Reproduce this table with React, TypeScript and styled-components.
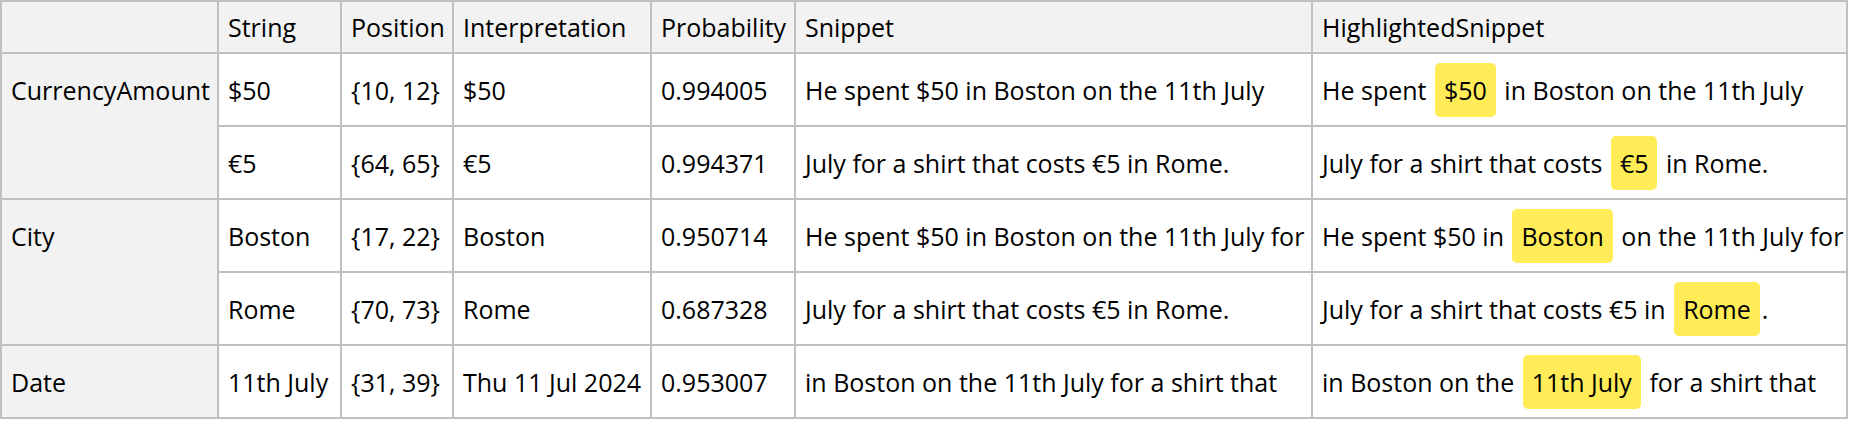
import React from "react";
import styled, { createGlobalStyle } from "styled-components";

const GlobalStyle = createGlobalStyle`
  html, body {
    margin: 0;
    padding: 0;
    background: #ffffff;
  }
  *, *::before, *::after {
    box-sizing: border-box;
  }
`;

const LINE = "#c0c0c0";

const Table = styled.table`
  border-collapse: separate;
  border-spacing: 0;
  table-layout: fixed;
  width: 1846px;
  border-top: 2px solid ${LINE};
  border-left: 2px solid ${LINE};
  font-family: "Open Sans", "Noto Sans", sans-serif;
  font-size: 25px;
  color: #000000;
`;

const HeadCell = styled.th`
  height: 52px;
  padding: 0 9px;
  text-align: left;
  font-weight: 400;
  background: #f2f2f2;
  border-right: 2px solid ${LINE};
  border-bottom: 2px solid ${LINE};
  white-space: nowrap;
  vertical-align: middle;
`;

const GroupCell = styled.th`
  padding: 0 9px;
  text-align: left;
  font-weight: 400;
  background: #f2f2f2;
  border-right: 2px solid ${LINE};
  border-bottom: 2px solid ${LINE};
  vertical-align: top;
  white-space: nowrap;
`;

const GroupLabel = styled.div`
  height: 71px;
  display: flex;
  align-items: center;
`;

const Cell = styled.td`
  height: 73px;
  padding: 0 9px;
  border-right: 2px solid ${LINE};
  border-bottom: 2px solid ${LINE};
  vertical-align: middle;
  white-space: nowrap;
  overflow: hidden;
`;

const Pill = styled.span`
  display: inline-block;
  line-height: 54px;
  padding: 0 9px;
  margin: 0 2px;
  background: #ffec57;
  border-radius: 5px;
`;

type Row = {
  str: string;
  pos: string;
  interp: string;
  prob: string;
  snippet: string;
  hl: [string, string, string];
};

type Group = { label: string; rows: Row[] };

const groups: Group[] = [
  {
    label: "CurrencyAmount",
    rows: [
      {
        str: "$50",
        pos: "{10, 12}",
        interp: "$50",
        prob: "0.994005",
        snippet: "He spent $50 in Boston on the 11th July",
        hl: ["He spent ", "$50", " in Boston on the 11th July"],
      },
      {
        str: "€5",
        pos: "{64, 65}",
        interp: "€5",
        prob: "0.994371",
        snippet: "July for a shirt that costs €5 in Rome.",
        hl: ["July for a shirt that costs ", "€5", " in Rome."],
      },
    ],
  },
  {
    label: "City",
    rows: [
      {
        str: "Boston",
        pos: "{17, 22}",
        interp: "Boston",
        prob: "0.950714",
        snippet: "He spent $50 in Boston on the 11th July for",
        hl: ["He spent $50 in ", "Boston", " on the 11th July for"],
      },
      {
        str: "Rome",
        pos: "{70, 73}",
        interp: "Rome",
        prob: "0.687328",
        snippet: "July for a shirt that costs €5 in Rome.",
        hl: ["July for a shirt that costs €5 in ", "Rome", "."],
      },
    ],
  },
  {
    label: "Date",
    rows: [
      {
        str: "11th July",
        pos: "{31, 39}",
        interp: "Thu 11 Jul 2024",
        prob: "0.953007",
        snippet: "in Boston on the 11th July for a shirt that",
        hl: ["in Boston on the ", "11th July", " for a shirt that"],
      },
    ],
  },
];

const colWidths = [217, 123, 112, 198, 144, 517, 535];
const headers = ["", "String", "Position", "Interpretation", "Probability", "Snippet", "HighlightedSnippet"];

export default function App() {
  return (
    <>
      <GlobalStyle />
      <Table>
        <colgroup>
          {colWidths.map((w, i) => (
            <col key={i} style={{ width: w }} />
          ))}
        </colgroup>
        <thead>
          <tr>
            {headers.map((h, i) => (
              <HeadCell key={i}>{h}</HeadCell>
            ))}
          </tr>
        </thead>
        <tbody>
          {groups.map((g) =>
            g.rows.map((r, i) => (
              <tr key={g.label + i}>
                {i === 0 && (
                  <GroupCell rowSpan={g.rows.length}>
                    <GroupLabel>{g.label}</GroupLabel>
                  </GroupCell>
                )}
                <Cell>{r.str}</Cell>
                <Cell>{r.pos}</Cell>
                <Cell>{r.interp}</Cell>
                <Cell>{r.prob}</Cell>
                <Cell>{r.snippet}</Cell>
                <Cell>
                  {r.hl[0]}
                  <Pill>{r.hl[1]}</Pill>
                  {r.hl[2]}
                </Cell>
              </tr>
            ))
          )}
        </tbody>
      </Table>
    </>
  );
}
